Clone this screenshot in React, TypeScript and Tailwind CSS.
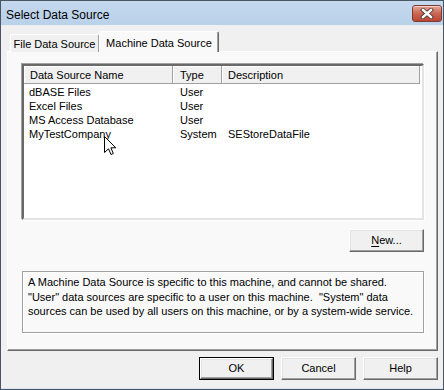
import React from "react";

const font = { fontFamily: '"Liberation Sans", Arial, sans-serif' };

function Btn({ label, def, underline }: { label: string; def?: boolean; underline?: boolean }) {
  const inner = (
    <div className="w-full h-full flex items-center justify-center bg-[#f0f0f0] border-t border-l border-t-white border-l-white border-r border-b border-r-[#696969] border-b-[#696969] shadow-[inset_-1px_-1px_0_#a0a0a0,inset_1px_1px_0_#e3e3e3] text-[11px] text-black">
      {underline ? (
        <span>
          <span className="underline underline-offset-2">N</span>ew...
        </span>
      ) : (
        label
      )}
    </div>
  );
  if (def) {
    return <div className="w-[75px] h-[23px] border border-black">{inner}</div>;
  }
  return <div className="w-[75px] h-[23px]">{inner}</div>;
}

export default function App() {
  const rows = [
    ["dBASE Files", "User", ""],
    ["Excel Files", "User", ""],
    ["MS Access Database", "User", ""],
    ["MyTestCompany", "System", "SEStoreDataFile"],
  ];
  return (
    <div
      className="w-[444px] h-[390px] border border-[#4a5564] bg-[#bcd3ea] flex flex-col overflow-hidden"
      style={font}
    >
      {/* Title bar */}
      <div className="h-[24px] flex items-start justify-between bg-gradient-to-b from-[#c4d8ee] to-[#b9d1ea] shrink-0">
        <div className="pl-[5px] pt-[6px] text-[12px] text-black leading-[16px]">Select Data Source</div>
        <div className="mt-[4px] mr-[1px] w-[30px] h-[17px] rounded-[3px] border border-[#7d3a30] bg-gradient-to-b from-[#e3a595] via-[#cd6554] to-[#bd4634] flex items-center justify-center shadow-[inset_0_1px_0_rgba(255,255,255,0.5)]">
          <svg width="14" height="11" viewBox="0 0 14 11">
            <path d="M3 2 L11 9 M11 2 L3 9" stroke="#4b3b38" strokeWidth="4.2" strokeLinecap="square" />
            <path d="M3 2 L11 9 M11 2 L3 9" stroke="#ffffff" strokeWidth="2.4" strokeLinecap="square" />
          </svg>
        </div>
      </div>

      {/* Body */}
      <div className="flex-1 bg-[#f0f0f0] border-b border-b-[#d6e4f3] flex flex-col pt-[7px] pl-[6px] pr-[5px]">
        {/* Tabs */}
        <div className="h-[20px] flex items-end relative z-10 -mb-[1px]">
          <div className="ml-[3px] w-[89px] h-[18px] bg-[#f0f0f0] border-t border-l border-t-white border-l-white border-r border-r-[#a0a0a0] rounded-t-[2px] flex items-center justify-center pt-[1px] text-[11px] text-black">
            File Data Source
          </div>
          <div className="w-[120px] h-[21px] bg-[#f9f9f9] border-t border-l border-t-white border-l-white border-r border-r-[#696969] shadow-[inset_-1px_0_0_#a0a0a0] rounded-t-[2px] flex items-start justify-center pt-[3px] text-[11px] text-black">
            Machine Data Source
          </div>
        </div>

        {/* Panel */}
        <div className="w-[431px] h-[300px] bg-[#f9f9f9] border-t border-l border-t-white border-l-white border-r border-b border-r-[#696969] border-b-[#696969] shadow-[inset_-1px_-1px_0_#a0a0a0] pl-[14px] pr-[13px] pt-[12px] flex flex-col">
          {/* List view */}
          <div className="relative h-[156px] bg-white border-2 border-t-[#696969] border-l-[#696969] border-r-[#e3e3e3] border-b-[#e3e3e3] shadow-[-1px_-1px_0_#a0a0a0,1px_1px_0_#ffffff]">
            <div className="flex h-[18px] text-[11px] text-black">
              <div className="w-[149px] bg-[#f0f0f0] border-r border-b border-r-[#a0a0a0] border-b-[#a0a0a0] shadow-[inset_1px_1px_0_#ffffff] pl-[6px] pt-[1px] flex items-center">
                Data Source Name
              </div>
              <div className="w-[49px] bg-[#f0f0f0] border-r border-b border-r-[#a0a0a0] border-b-[#a0a0a0] shadow-[inset_1px_1px_0_#ffffff] pl-[7px] pt-[1px] flex items-center">
                Type
              </div>
              <div className="w-[198px] bg-[#f0f0f0] border-r border-b border-r-[#a0a0a0] border-b-[#a0a0a0] shadow-[inset_1px_1px_0_#ffffff] pl-[6px] pt-[1px] flex items-center">
                Description
              </div>
            </div>
            <div className="pt-[1px]">
              {rows.map((r) => (
                <div key={r[0]} className="flex h-[14px] items-center text-[11px] text-black leading-[14px]">
                  <div className="w-[149px] pl-[5px]">{r[0]}</div>
                  <div className="w-[49px] pl-[7px]">{r[1]}</div>
                  <div className="w-[198px] pl-[6px]">{r[2]}</div>
                </div>
              ))}
            </div>
            {/* Mouse cursor */}
            <svg className="absolute left-[80px] top-[70px]" width="13" height="20" viewBox="0 0 13 20">
              <path
                d="M0.5 0.5 L0.5 16.5 L4.5 12.8 L7 18.5 L9.3 17.5 L6.9 11.8 L11.8 11.8 Z"
                fill="#ffffff"
                stroke="#000000"
                strokeWidth="1"
                strokeLinejoin="miter"
              />
            </svg>
          </div>

          {/* New button */}
          <div className="mt-[9px] flex justify-end">
            <Btn label="New..." underline />
          </div>

          {/* Info box */}
          <div className="mt-[19px] h-[62px] border border-[#a0a0a0] shadow-[1px_1px_0_#ffffff,inset_1px_1px_0_#ffffff] pl-[5px] pt-[3px] text-[11px] leading-[14.5px] text-black">
            <div>A Machine Data Source is specific to this machine, and cannot be shared.</div>
            <div>"User" data sources are specific to a user on this machine.&nbsp; "System" data</div>
            <div>sources can be used by all users on this machine, or by a system-wide service.</div>
          </div>
        </div>

        {/* Bottom buttons */}
        <div className="mt-[6px] w-[431px] flex justify-end gap-[7px]">
          <Btn label="OK" def />
          <Btn label="Cancel" />
          <Btn label="Help" />
        </div>
      </div>
    </div>
  );
}
